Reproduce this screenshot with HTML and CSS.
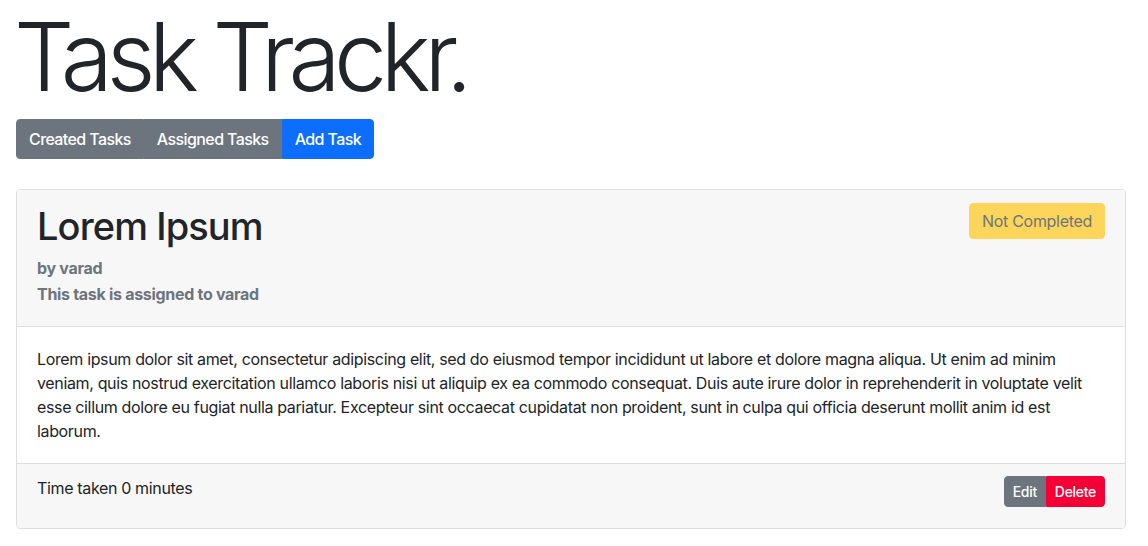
FILE: index.html
```html
<!DOCTYPE html>
<html>
<head>
<meta charset="utf-8">
<link rel="stylesheet" href="styles.css">
</head>
<body>
<div class="page">
  <h1 class="display">Task Trackr.</h1>
  <div class="btn-group nav-group">
    <button class="btn btn-secondary">Created Tasks</button>
    <button class="btn btn-secondary">Assigned Tasks</button>
    <button class="btn btn-primary">Add Task</button>
  </div>
  <div class="card">
    <div class="card-header">
      <div class="header-text">
        <h2 class="card-title">Lorem Ipsum</h2>
        <h6 class="card-subtitle">by varad</h6>
        <h6 class="card-subtitle">This task is assigned to varad</h6>
      </div>
      <button class="btn btn-warning">Not Completed</button>
    </div>
    <div class="card-body">
      <p class="card-text">Lorem ipsum dolor sit amet, consectetur adipiscing elit, sed do eiusmod tempor incididunt ut labore et dolore magna aliqua. Ut enim ad minim veniam, quis nostrud exercitation ullamco laboris nisi ut aliquip ex ea commodo consequat. Duis aute irure dolor in reprehenderit in voluptate velit esse cillum dolore eu fugiat nulla pariatur. Excepteur sint occaecat cupidatat non proident, sunt in culpa qui officia deserunt mollit anim id est laborum.</p>
    </div>
    <div class="card-footer">
      <p class="time">Time taken 0 minutes</p>
      <div class="btn-group">
        <button class="btn btn-sm btn-secondary">Edit</button>
        <button class="btn btn-sm btn-danger">Delete</button>
      </div>
    </div>
  </div>
</div>
</body>
</html>
```

FILE: styles.css
```css
* { box-sizing: border-box; }
html, body { margin: 0; padding: 0; }
body {
  font-family: Inter, "Noto Sans", "Liberation Sans", sans-serif;
  font-size: 16px;
  line-height: 1.5;
  color: #212529;
  background: #fff;
  letter-spacing: -0.35px;
}
.page {
  width: 1110px;
  margin-left: 16px;
}
.display {
  font-size: 95px;
  font-weight: 300;
  line-height: 1.2;
  margin: 0 0 5px -2px;
  letter-spacing: -6.6px;
}
.btn-group {
  display: inline-flex;
}
.nav-group {
  margin-bottom: 30px;
}
.btn {
  font-family: inherit;
  font-size: 16px;
  line-height: 24px;
  padding: 7px 12px;
  border: 1px solid transparent;
  border-radius: 4px;
  color: #fff;
  font-weight: 500;
  letter-spacing: -0.6px;
  cursor: pointer;
}
.btn-group .btn { border-radius: 0; }
.btn-group .btn:first-child { border-top-left-radius: 4px; border-bottom-left-radius: 4px; }
.btn-group .btn:last-child { border-top-right-radius: 4px; border-bottom-right-radius: 4px; }
.btn-secondary { background: #6c757d; border-color: #6c757d; }
.btn-primary { background: #0d6efd; border-color: #0d6efd; }
.btn-danger { background: #f50036; border-color: #f50036; }
.btn-warning {
  background: #fdd55a;
  border-color: #fdd55a;
  color: #6c757d;
  font-weight: 400;
  padding: 5px 12px;
  margin-top: 1px;
  letter-spacing: -0.3px;
}
.btn-sm {
  font-size: 14px;
  line-height: 21px;
  padding: 4px 8px;
  letter-spacing: -0.3px;
}
.card {
  border: 1px solid #dfdfdf;
  border-radius: 4px;
  overflow: hidden;
}
.card-header {
  background: #f7f7f7;
  border-bottom: 1px solid #dfdfdf;
  padding: 12px 20px;
  display: flex;
  justify-content: space-between;
  align-items: flex-start;
}
.header-text { padding-top: 2px; }
.card-title {
  font-size: 38px;
  font-weight: 500;
  line-height: 1.2;
  margin: 0 0 9px;
  letter-spacing: -0.9px;
}
.card-subtitle {
  font-size: 16px;
  font-weight: 700;
  line-height: 19px;
  color: #6c757d;
  margin: 0 0 7px;
  letter-spacing: -0.3px;
}
.card-subtitle:last-child { margin-bottom: 10px; }
.card-body {
  padding: 20px;
}
.card-text { margin: 0; }
.card-footer {
  background: #f7f7f7;
  border-top: 1px solid #dfdfdf;
  padding: 12px 20px;
  display: flex;
  justify-content: space-between;
  align-items: flex-start;
}
.time { margin: 0 0 16px; }
```
